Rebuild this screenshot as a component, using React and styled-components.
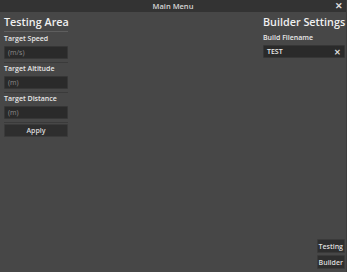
import React from 'react';
import styled, { createGlobalStyle } from 'styled-components';

const Global = createGlobalStyle`
  html, body {
    margin: 0;
    padding: 0;
    background: #474747;
  }
  #root {
    height: 272px;
  }
`;

const Window = styled.div`
  width: 347px;
  height: 272px;
  display: flex;
  flex-direction: column;
  background: #474747;
  font-family: "Open Sans", "Noto Sans", sans-serif;
  font-weight: 600;
  color: #e6e6e6;
  box-sizing: border-box;
  border-right: 1px solid #3c3c3c;
`;

const TitleBar = styled.div`
  height: 12px;
  flex: none;
  position: relative;
  display: flex;
  align-items: center;
  justify-content: center;
  background: #333333;
  font-size: 7.5px;
  color: #d6d6d6;
`;

const Close = styled.span`
  position: absolute;
  right: 3px;
  top: 0;
  line-height: 12px;
  font-size: 9px;
  color: #dcdcdc;
`;

const Body = styled.div`
  flex: 1;
  display: flex;
  justify-content: space-between;
  padding: 2px 1px 2px 4px;
`;

const Column = styled.div`
  width: ${p => p.$width}px;
  display: flex;
  flex-direction: column;
`;

const Heading = styled.div`
  font-size: 10.8px;
  line-height: 16px;
  color: #f0f0f0;
  padding-bottom: 1px;
  border-bottom: ${p => (p.$rule ? '1px solid #5e5e5e' : 'none')};
  margin-bottom: 2px;
  white-space: nowrap;
`;

const Label = styled.div`
  font-size: 7px;
  line-height: 10px;
  margin-top: ${p => p.$top || 0}px;
  margin-bottom: 2px;
  color: #e8e8e8;
  white-space: nowrap;
`;

const Field = styled.div`
  height: 13px;
  box-sizing: border-box;
  display: flex;
  align-items: center;
  justify-content: space-between;
  padding: 0 3px 0 3px;
  background: #2a2a2a;
  border: 1px solid #363636;
  border-radius: 1px;
  font-size: 7px;
  color: ${p => (p.$placeholder ? '#8a8a8a' : '#ececec')};
  font-weight: ${p => (p.$placeholder ? 400 : 600)};
`;

const ClearMark = styled.span`
  font-size: 8px;
  color: #dcdcdc;
`;

const Rule = styled.div`
  height: 1px;
  background: #3a3a3a;
  margin-top: 3px;
`;

const Button = styled.div`
  height: ${p => p.$h || 13}px;
  box-sizing: border-box;
  display: flex;
  align-items: center;
  justify-content: center;
  padding: 0 1px;
  background: #2e2e2e;
  border: 1px solid #3a3a3a;
  border-radius: 1px;
  font-size: 7px;
  color: #dedede;
`;

const Tabs = styled.div`
  margin-top: auto;
  display: flex;
  flex-direction: column;
  align-items: flex-end;
  gap: 2px;
  padding-bottom: 1px;
`;

const Spacer = styled.div`
  height: 1px;
`;

export default function App() {
  return (
    <>
      <Global />
      <Window>
        <TitleBar>
          Main Menu
          <Close>✕</Close>
        </TitleBar>
        <Body>
          <Column $width={64}>
            <Heading $rule>Testing Area</Heading>
            <Label>Target Speed</Label>
            <Field $placeholder>(m/s)</Field>
            <Rule />
            <Label $top={1}>Target Altitude</Label>
            <Field $placeholder>(m)</Field>
            <Rule />
            <Label $top={1}>Target Distance</Label>
            <Field $placeholder>(m)</Field>
            <Rule />
            <Spacer />
            <Button>Apply</Button>
          </Column>
          <Column $width={82}>
            <Heading>Builder Settings</Heading>
            <Label>Build Filename</Label>
            <Field>
              TEST
              <ClearMark>✕</ClearMark>
            </Field>
            <Tabs>
              <Button $h={14}>Testing</Button>
              <Button $h={14}>Builder</Button>
            </Tabs>
          </Column>
        </Body>
      </Window>
    </>
  );
}
